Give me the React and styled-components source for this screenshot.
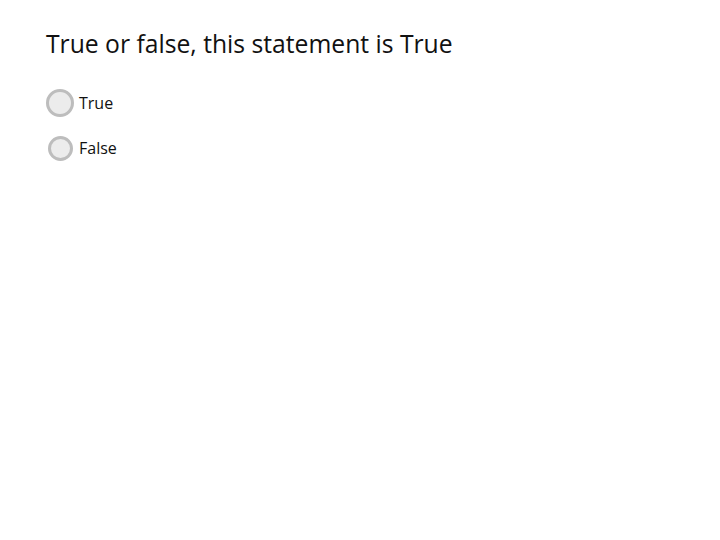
import React from 'react'
import styled, { createGlobalStyle } from 'styled-components'

const Global = createGlobalStyle`
  body {
    margin: 0;
    background: #fff;
    font-family: 'Open Sans', sans-serif;
    color: #111;
  }
`

const Page = styled.div`
  padding: 28px 46px;
`

const Title = styled.h1`
  margin: 0 0 29px;
  font-size: 24.7px;
  font-weight: 400;
  line-height: 32px;
`

const Options = styled.div`
  display: flex;
  flex-direction: column;
  gap: 17px;
`

const Option = styled.label`
  display: flex;
  align-items: center;
  gap: 5px;
  height: 28px;
  font-size: 16px;
  cursor: pointer;
`

const RadioWrap = styled.span`
  width: 28px;
  height: 28px;
  display: flex;
  align-items: center;
  justify-content: center;
`

const Radio = styled.span`
  box-sizing: border-box;
  width: ${(p) => (p.$big ? 28 : 25)}px;
  height: ${(p) => (p.$big ? 28 : 25)}px;
  border-radius: 50%;
  border: 3px solid #bdbdbd;
  background: #ececec;
`

const options = ['True', 'False']

const App = () => {
  return (
    <>
      <Global />
      <Page>
        <Title>True or false, this statement is True</Title>
        <Options>
          {options.map((o, i) => (
            <Option key={o}>
              <RadioWrap>
                <Radio $big={i === 0} />
              </RadioWrap>
              {o}
            </Option>
          ))}
        </Options>
      </Page>
    </>
  )
}

export default App
